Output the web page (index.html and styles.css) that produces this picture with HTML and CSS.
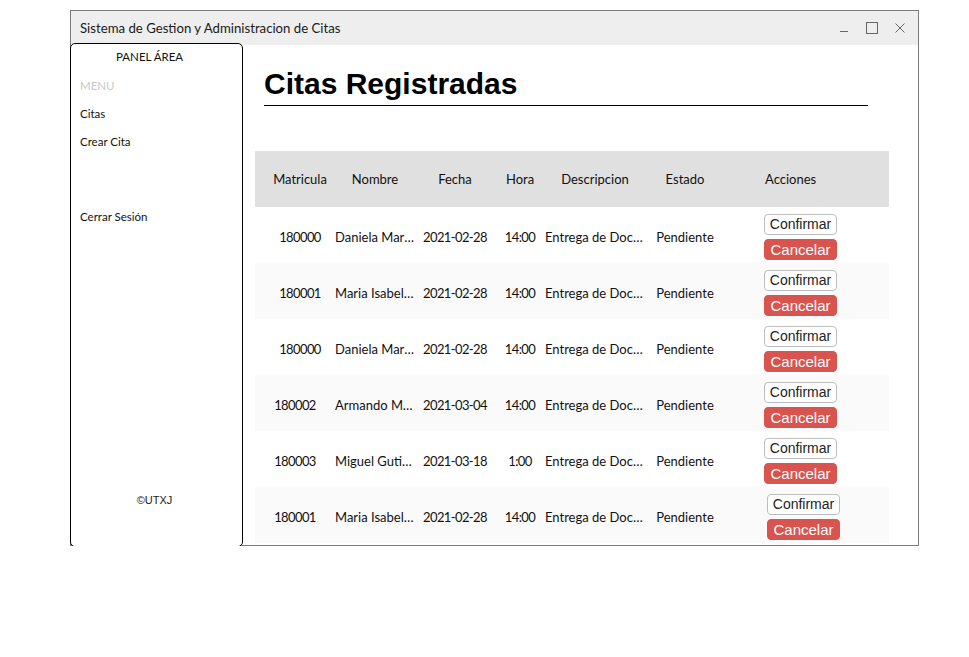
FILE: index.html
```html
<!DOCTYPE html>
<html lang="es">
<head>
<meta charset="utf-8">
<title>Sistema de Gestion y Administracion de Citas</title>
<link rel="stylesheet" href="styles.css">
</head>
<body>
<div class="window">
  <div class="titlebar">
    <span class="title">Sistema de Gestion y Administracion de Citas</span>
    <div class="controls">
      <svg class="ctl" width="12" height="12" viewBox="0 0 12 12"><path d="M2 9.5h8" stroke="#666" stroke-width="1"/></svg>
      <svg class="ctl" width="12" height="12" viewBox="0 0 12 12"><rect x="0.5" y="0.5" width="11" height="11" fill="none" stroke="#666" stroke-width="1"/></svg>
      <svg class="ctl" width="12" height="12" viewBox="0 0 12 12"><path d="M1.5 1.5l9 9M10.5 1.5l-9 9" stroke="#666" stroke-width="1"/></svg>
    </div>
  </div>
  <div class="body">
    <aside class="sidebar">
      <div class="panel-title">PANEL ÁREA</div>
      <div class="menu-label">MENU</div>
      <a class="nav-item">Citas</a>
      <a class="nav-item">Crear Cita</a>
      <a class="nav-item logout">Cerrar Sesión</a>
      <div class="copyright">©UTXJ</div>
    </aside>
    <main class="main">
      <h1 class="page-title">Citas Registradas</h1>
      <div class="table">
        <div class="row head">
          <div class="c c1">Matricula</div>
          <div class="c c2">Nombre</div>
          <div class="c c3">Fecha</div>
          <div class="c c4">Hora</div>
          <div class="c c5">Descripcion</div>
          <div class="c c6">Estado</div>
          <div class="c c7">Acciones</div>
        </div>
        <div class="row">
          <div class="c c1 num">180000</div>
          <div class="c c2"><span class="ell">Daniela Martinez</span></div>
          <div class="c c3 num">2021-02-28</div>
          <div class="c c4 num">14:00</div>
          <div class="c c5"><span class="ell">Entrega de Documentos</span></div>
          <div class="c c6">Pendiente</div>
          <div class="c c7"><div class="actions"><button class="btn btn-ok">Confirmar</button><button class="btn btn-cancel">Cancelar</button></div></div>
        </div>
        <div class="row alt">
          <div class="c c1 num">180001</div>
          <div class="c c2"><span class="ell">Maria Isabel Lopez</span></div>
          <div class="c c3 num">2021-02-28</div>
          <div class="c c4 num">14:00</div>
          <div class="c c5"><span class="ell">Entrega de Documentos</span></div>
          <div class="c c6">Pendiente</div>
          <div class="c c7"><div class="actions"><button class="btn btn-ok">Confirmar</button><button class="btn btn-cancel">Cancelar</button></div></div>
        </div>
        <div class="row">
          <div class="c c1 num">180000</div>
          <div class="c c2"><span class="ell">Daniela Martinez</span></div>
          <div class="c c3 num">2021-02-28</div>
          <div class="c c4 num">14:00</div>
          <div class="c c5"><span class="ell">Entrega de Documentos</span></div>
          <div class="c c6">Pendiente</div>
          <div class="c c7"><div class="actions"><button class="btn btn-ok">Confirmar</button><button class="btn btn-cancel">Cancelar</button></div></div>
        </div>
        <div class="row alt">
          <div class="c c1 num shift">180002</div>
          <div class="c c2"><span class="ell">Armando Mendoza</span></div>
          <div class="c c3 num">2021-03-04</div>
          <div class="c c4 num">14:00</div>
          <div class="c c5"><span class="ell">Entrega de Documentos</span></div>
          <div class="c c6">Pendiente</div>
          <div class="c c7"><div class="actions"><button class="btn btn-ok">Confirmar</button><button class="btn btn-cancel">Cancelar</button></div></div>
        </div>
        <div class="row">
          <div class="c c1 num shift">180003</div>
          <div class="c c2"><span class="ell">Miguel Gutierrez</span></div>
          <div class="c c3 num">2021-03-18</div>
          <div class="c c4 num">1:00</div>
          <div class="c c5"><span class="ell">Entrega de Documentos</span></div>
          <div class="c c6">Pendiente</div>
          <div class="c c7"><div class="actions"><button class="btn btn-ok">Confirmar</button><button class="btn btn-cancel">Cancelar</button></div></div>
        </div>
        <div class="row alt">
          <div class="c c1 num shift">180001</div>
          <div class="c c2"><span class="ell">Maria Isabel Lopez</span></div>
          <div class="c c3 num">2021-02-28</div>
          <div class="c c4 num">14:00</div>
          <div class="c c5"><span class="ell">Entrega de Documentos</span></div>
          <div class="c c6">Pendiente</div>
          <div class="c c7"><div class="actions late"><button class="btn btn-ok">Confirmar</button><button class="btn btn-cancel">Cancelar</button></div></div>
        </div>
      </div>
    </main>
  </div>
</div>
</body>
</html>
```
FILE: styles.css
```css
html, body {
  margin: 0;
  padding: 0;
  background: #fff;
}
body {
  font-family: "Lato", "Noto Sans", sans-serif;
  color: #111;
}
.window {
  margin: 10px 0 0 70px;
  width: 849px;
  height: 536px;
  box-sizing: border-box;
  border: 1px solid #7a7a7a;
  display: flex;
  flex-direction: column;
}
.titlebar {
  height: 34px;
  flex: none;
  background: #eeeeee;
  display: flex;
  align-items: center;
  padding-left: 9px;
  box-sizing: border-box;
}
.title {
  font-size: 13.2px;
  color: #1a1a1a;
  flex: 1;
}
.controls {
  display: flex;
  align-items: center;
  gap: 16px;
  padding-right: 12px;
}
.ctl { display: block; }
.body {
  flex: 1;
  display: flex;
  min-height: 0;
}
.sidebar {
  flex: none;
  width: 173px;
  height: 504px;
  margin: -2px 0 0 -1px;
  box-sizing: border-box;
  border: 1px solid #000;
  border-radius: 5px;
  background: #fff;
  display: flex;
  flex-direction: column;
  font-size: 11.5px;
  position: relative;
  z-index: 1;
}
.panel-title {
  padding: 5px 0 0 45px;
  height: 34px;
  box-sizing: border-box;
  line-height: 16px;
}
.menu-label, .nav-item {
  display: block;
  padding-left: 9px;
  height: 28px;
  line-height: 16px;
  box-sizing: border-box;
}
.menu-label { color: #c8c8c8; }
.nav-item { color: #111; }
.logout { margin-top: 47px; }
.copyright {
  margin-top: auto;
  margin-bottom: 40px;
  text-align: center;
  padding-right: 4px;
  font-family: "Liberation Sans", Arial, sans-serif;
  font-size: 11px;
  color: #222;
}
.main {
  flex: 1;
  min-width: 0;
  padding-left: 12px;
}
.page-title {
  margin: 22px 0 0 9px;
  width: 604px;
  font-family: "Liberation Sans", Arial, sans-serif;
  font-weight: bold;
  font-size: 30px;
  line-height: 34px;
  padding-bottom: 4px;
  border-bottom: 1px solid #000;
  color: #000;
}
.table {
  margin-top: 45px;
  width: 634px;
  font-size: 13px;
}
.row {
  display: grid;
  grid-template-columns: 80px 80px 80px 50px 100px 80px 164px;
  align-items: center;
  height: 56px;
  padding-top: 3px;
  box-sizing: border-box;
}
.row.head { background: #e0e0e0; height: 56px; padding-top: 0; }
.row.alt { background: #fafafa; }
.c {
  text-align: center;
  white-space: nowrap;
}
.num { letter-spacing: -0.6px; }
.c1 { padding-left: 10px; }
.c1.shift { padding-left: 0; }
.c7 { text-align: left; padding-left: 39px; }
.head .c7 { padding-left: 40px; }
.ell {
  display: block;
  overflow: hidden;
  text-overflow: ellipsis;
  white-space: nowrap;
}
.actions {
  display: flex;
  flex-direction: column;
  gap: 4px;
  width: 73px;
}
.actions.late { margin-left: 3px; }
.btn {
  width: 73px;
  height: 21px;
  padding: 0;
  border-radius: 4px;
  font-family: "Liberation Sans", Arial, sans-serif;
  cursor: pointer;
  box-sizing: border-box;
}
.btn-ok {
  background: #fff;
  border: 1px solid #bdbdbd;
  color: #222;
  font-size: 14px;
}
.btn-cancel {
  background: #d9534f;
  border: 1px solid #d9534f;
  color: #fff;
  font-size: 15px;
}
```
